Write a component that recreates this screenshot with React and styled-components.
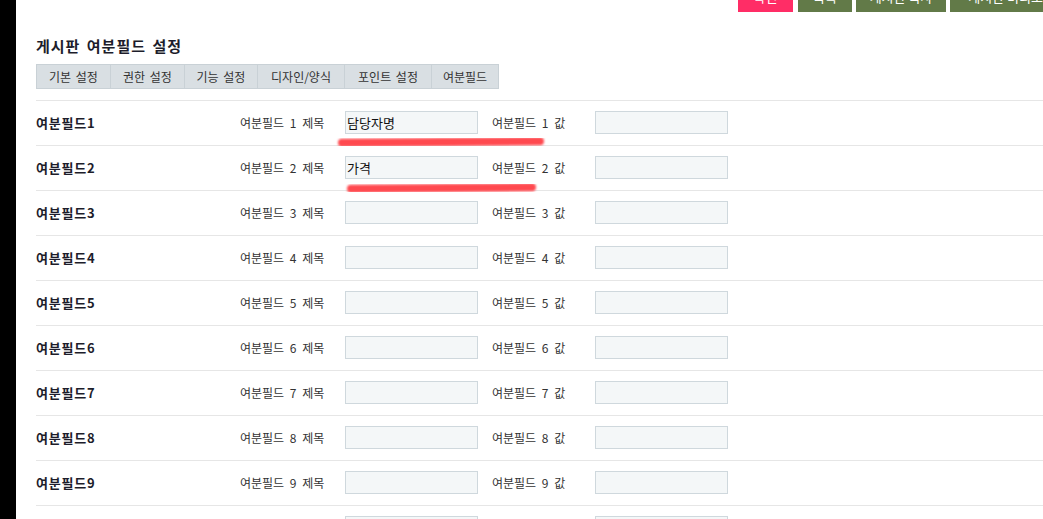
import React from "react";
import styled, { createGlobalStyle } from "styled-components";

const GlobalStyle = createGlobalStyle`
  html, body {
    margin: 0;
    padding: 0;
    background: #fff;
    overflow: hidden;
  }
  body {
    font-family: "Noto Sans CJK KR", "Noto Sans", sans-serif;
    color: #222;
  }
`;

const Page = styled.div`
  display: flex;
  width: 1043px;
  height: 519px;
  overflow: hidden;
`;

const SideStrip = styled.div`
  width: 16px;
  flex: none;
  background: #000;
`;

const Content = styled.div`
  flex: 1;
  min-width: 0;
  padding-left: 20px;
  display: flex;
  flex-direction: column;
  & > * {
    flex: none;
  }
`;

const TopButtons = styled.div`
  display: flex;
  justify-content: flex-end;
  gap: 4px;
  margin-top: -18px;
  height: 30px;
  margin-right: -30px;
`;

const TopButton = styled.button`
  height: 30px;
  width: ${(p) => p.$w}px;
  border: none;
  padding: 0;
  background: ${(p) => (p.$pink ? "#ff2d66" : "#627a48")};
  color: #fff;
  font-family: inherit;
  font-size: 13px;
  line-height: 30px;
  ${(p) => p.$pink && "margin-right: 1px;"}
`;

const Title = styled.h2`
  margin: 25px 0 0;
  font-size: 15px;
  font-weight: 700;
  letter-spacing: 1px;
  word-spacing: 2px;
  color: #1d1d2b;
  line-height: 18px;
`;

const Tabs = styled.div`
  display: flex;
  align-self: flex-start;
  margin-top: 9px;
  background: #d9dfe3;
  border: 1px solid #c9d1d6;
  height: 23px;
`;

const Tab = styled.div`
  display: flex;
  align-items: center;
  justify-content: center;
  width: ${(p) => p.$w}px;
  font-size: 12px;
  word-spacing: 2px;
  color: #333;
  border-left: ${(p) => (p.$first ? "none" : "1px solid #c9d1d6")};
  box-sizing: border-box;
`;

const Table = styled.div`
  margin-top: 11px;
  border-top: 1px solid #e6e6e6;
`;

const Row = styled.div`
  position: relative;
  display: flex;
  align-items: center;
  height: 44px;
  border-bottom: 1px solid #e6e6e6;
`;

const RowLabel = styled.div`
  width: 204px;
  font-size: 13px;
  font-weight: 700;
  letter-spacing: 0.8px;
  color: #1d1d2b;
  margin-top: -2px;
`;

const FieldLabel = styled.div`
  width: ${(p) => p.$w}px;
  font-size: 12px;
  word-spacing: 3px;
  color: #333;
  margin-top: -2px;
`;

const Input = styled.div`
  width: 130px;
  height: 21px;
  border: 1px solid #cfd8dd;
  background: #f4f7f8;
  font-size: 13px;
  line-height: 21px;
  padding-left: 1px;
  box-sizing: content-box;
  color: #111;
  margin-top: -2px;
  margin-right: ${(p) => p.$mr || 0}px;
`;

const Mark = styled.svg`
  position: absolute;
  left: ${(p) => p.$x}px;
  top: ${(p) => p.$y}px;
  overflow: visible;
  pointer-events: none;
`;

const rows = [
  { n: 1, title: "담당자명", mark: { x: 302, y: 36, w: 206, tilt: -1.5 } },
  { n: 2, title: "가격", mark: { x: 311, y: 37, w: 189, tilt: -1.5 } },
  { n: 3 },
  { n: 4 },
  { n: 5 },
  { n: 6 },
  { n: 7 },
  { n: 8 },
  { n: 9 },
  { n: 10 },
];

const tabs = [
  { t: "기본 설정", w: 73 },
  { t: "권한 설정", w: 74 },
  { t: "기능 설정", w: 73 },
  { t: "디자인/양식", w: 87 },
  { t: "포인트 설정", w: 87 },
  { t: "여분필드", w: 67 },
];

function RedMark({ x, y, w, tilt }) {
  return (
    <Mark $x={x} $y={y} width={w} height="10">
      <defs>
        <filter id={`blur${x}`} x="-10%" y="-200%" width="120%" height="500%">
          <feGaussianBlur stdDeviation="1.2" />
        </filter>
      </defs>
      <path
        d={`M4 ${5 - tilt / 2} L${w - 4} ${5 + tilt / 2}`}
        stroke="#ff4a4f"
        strokeWidth="8"
        strokeLinecap="round"
        filter={`url(#blur${x})`}
      />
    </Mark>
  );
}

export default function App() {
  return (
    <>
      <GlobalStyle />
      <Page>
        <SideStrip />
        <Content>
          <TopButtons>
            <TopButton $pink $w={55}>확인</TopButton>
            <TopButton $w={54}>목록</TopButton>
            <TopButton $w={90}>게시판 복사</TopButton>
            <TopButton $w={123}>게시판 미리보기</TopButton>
          </TopButtons>
          <Title>게시판 여분필드 설정</Title>
          <Tabs>
            {tabs.map((tab, i) => (
              <Tab key={tab.t} $w={tab.w} $first={i === 0}>
                {tab.t}
              </Tab>
            ))}
          </Tabs>
          <Table>
            {rows.map((r) => (
              <Row key={r.n}>
                <RowLabel>{r.n < 10 ? `여분필드${r.n}` : ""}</RowLabel>
                <FieldLabel $w={105}>여분필드 {r.n} 제목</FieldLabel>
                <Input $mr={14}>{r.title || ""}</Input>
                <FieldLabel $w={103}>여분필드 {r.n} 값</FieldLabel>
                <Input />
                {r.mark && <RedMark {...r.mark} />}
              </Row>
            ))}
          </Table>
        </Content>
      </Page>
    </>
  );
}
